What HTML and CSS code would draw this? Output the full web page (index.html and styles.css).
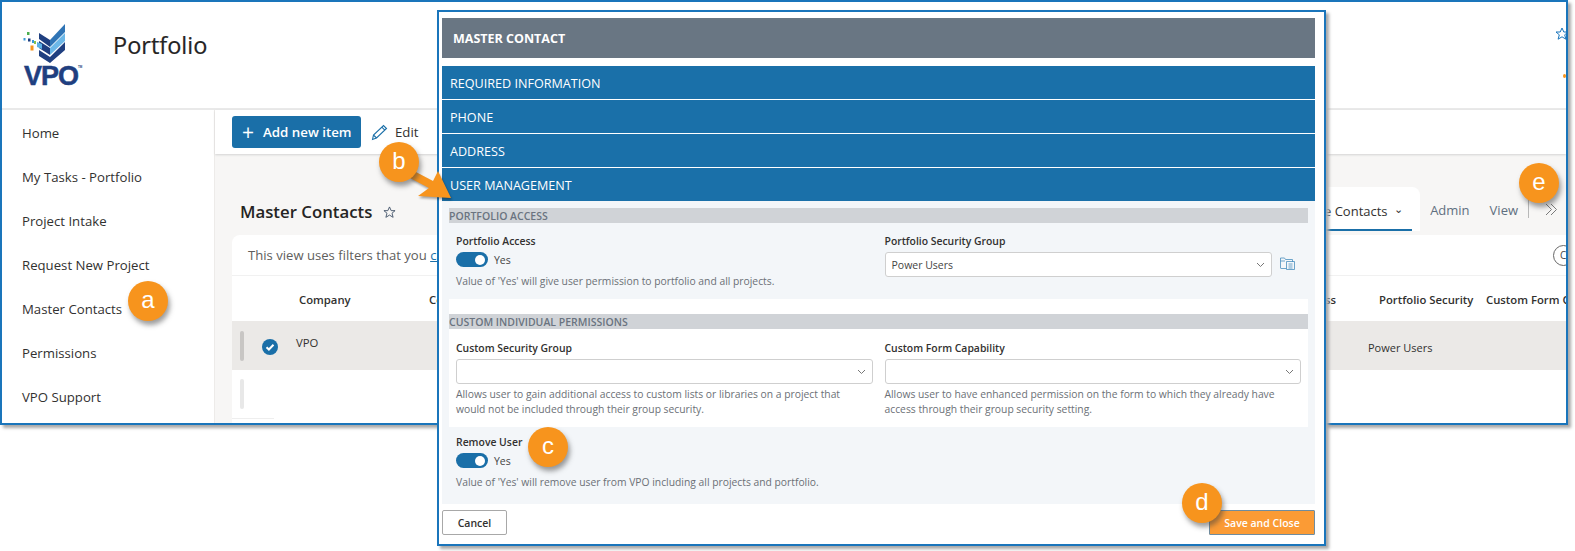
FILE: index.html
```html
<!DOCTYPE html>
<html lang="en">
<head>
<meta charset="utf-8">
<title>Master Contacts</title>
<link rel="stylesheet" href="styles.css">
</head>
<body>
<div class="stage">
  <div class="window">
    <header class="site-header">
      <div class="logo">
        <svg class="logo-mark" width="50" height="46" viewBox="20 20 50 46">
          <path fill="#1f3f80" d="M39 33l11 7v7l-11-8z"/>
          <path fill="#2f74b5" d="M50 40 65 24v8L50 47z"/>
          <path fill="#1f3f80" d="M39 41l11 7v7l-11-7z"/>
          <path fill="#6cb8e8" d="M50 48l15-15v8L50 55z"/>
          <path fill="#1f3f80" d="M39 50l11 7 15-15v8L50 63l-11-7z"/>
          <rect x="27" y="32" width="2.5" height="3" fill="#4caf50"/>
          <rect x="23.500" y="38" width="2" height="2.500" fill="#3a9ad9"/>
          <rect x="28" y="38.500" width="2.500" height="3" fill="#1f3f80"/>
          <rect x="32" y="40" width="2" height="3" fill="#3a9ad9"/>
          <rect x="34" y="41" width="2" height="3" fill="#8bc34a"/>
          <rect x="30.500" y="45.500" width="3" height="5" fill="#f7941d"/>
          <path fill="#5cb0e4" d="M37 42l5 2v5l-5-2z"/>
        </svg>
        <div class="logo-word">VPO<span class="logo-tm">TM</span></div>
      </div>
      <h1 class="site-title">Portfolio</h1>
      <div class="site-tools">
        <svg class="site-star" width="14" height="14" viewBox="0 0 14 14"><path fill="none" stroke="#1a75bb" d="M7 1l1.800 4h4.200l-3.300 2.800 1.200 4.400L7 9.800l-3.900 2.400 1.200-4.400L1 5h4.200z"/></svg>
        <span class="site-dot"></span>
      </div>
    </header>
    <div class="body-row">
      <nav class="side-nav">
        <a class="nav-item">Home</a>
        <a class="nav-item">My Tasks - Portfolio</a>
        <a class="nav-item">Project Intake</a>
        <a class="nav-item">Request New Project</a>
        <a class="nav-item">Master Contacts</a>
        <a class="nav-item">Permissions</a>
        <a class="nav-item">VPO Support</a>
      </nav>
      <main class="main">
        <div class="command-bar">
          <button class="add-btn"><span class="add-plus">+</span>Add new item</button>
          <button class="edit-btn">
            <svg width="17" height="17" viewBox="0 0 17 17"><path fill="none" stroke="#1a6fa8" stroke-width="1.100" d="M1.500 15.500l1-4.500L12.500 1.500l3 3-10 9.500zM2.500 11l3 3M10.800 3.200l3 3"/></svg>
            Edit
          </button>
        </div>
        <div class="title-row">
          <div class="page-title">Master Contacts
            <svg class="title-star" width="13" height="13" viewBox="0 0 14 14"><path fill="none" stroke="#44546a" d="M7 1l1.800 4h4.200l-3.300 2.800 1.200 4.400L7 9.800l-3.900 2.400 1.200-4.400L1 5h4.200z"/></svg>
          </div>
          <div class="tabs">
            <div class="tab tab-active">Active Contacts <span class="tab-caret">⌄</span></div>
            <div class="tab">Admin</div>
            <div class="tab">View</div>
            <div class="tab-sep"></div>
            <svg class="tab-more" width="13" height="13" viewBox="0 0 13 13"><path fill="none" stroke="#7a7a7a" d="M1 1l5.500 5.500L1 12M6 1l5.500 5.500L6 12"/></svg>
          </div>
        </div>
        <section class="card">
          <div class="filter-row">
            <span>This view uses filters that you <a class="filter-link">can edit</a></span>
            <span class="clear-circle">C</span>
          </div>
          <div class="grid-row grid-head">
            <div></div>
            <div>Company</div>
            <div class="col-contact"><span>Contact</span><span>Portfolio Access</span></div>
            <div>Portfolio Security</div>
            <div class="col-clip">Custom Form Capability</div>
          </div>
          <div class="grid-row grid-selected">
            <div class="row-lead"><span class="handle"></span>
              <svg class="check" width="16" height="16" viewBox="0 0 16 16"><circle cx="8" cy="8" r="8" fill="#1a6fa8"/><path fill="none" stroke="#fff" stroke-width="2" d="M4.500 8.200l2.400 2.300 4.600-4.700"/></svg>
            </div>
            <div class="cell-up">VPO</div>
            <div></div>
            <div class="cell-power">Power Users</div>
            <div></div>
          </div>
          <div class="grid-row grid-empty">
            <div class="row-lead"><span class="handle handle-light"></span></div>
          </div>
          <div class="stub-line"></div>
        </section>
      </main>
    </div>
  </div>

  <div class="modal">
    <div class="modal-head">MASTER CONTACT</div>
    <div class="accordion">
      <div class="acc-bar">REQUIRED INFORMATION</div>
      <div class="acc-bar">PHONE</div>
      <div class="acc-bar">ADDRESS</div>
      <div class="acc-bar">USER MANAGEMENT</div>
    </div>
    <div class="panel">
      <div class="sec-bar">PORTFOLIO ACCESS</div>
      <div class="fields fields-a">
        <div class="field">
          <div class="f-label">Portfolio Access</div>
          <div class="toggle-row"><span class="toggle"><span class="knob"></span></span>Yes</div>
          <div class="f-help f-help-a">Value of 'Yes' will give user permission to portfolio and all projects.</div>
        </div>
        <div class="field">
          <div class="f-label">Portfolio Security Group</div>
          <div class="select-row">
            <div class="select">Power Users<svg class="chev" width="9" height="6" viewBox="0 0 9 6"><path fill="none" stroke="#777" d="M1 1l3.500 3.500L8 1"/></svg></div>
            <svg class="folder" width="15" height="13" viewBox="0 0 15 13"><path fill="none" stroke="#4a8fbe" stroke-width=".8" d="M.5 11V1h4l1 1.500h7V5M.5 11.500h6M.5 4h4.500"/><path fill="none" stroke="#4a8fbe" stroke-width=".8" d="M6.500 4.500h8v8h-8zM8.500 7h4M8.500 9h4M8.500 11h4"/></svg>
          </div>
        </div>
      </div>
      <div class="white-block">
        <div class="sec-bar">CUSTOM INDIVIDUAL PERMISSIONS</div>
        <div class="fields fields-b">
          <div class="field">
            <div class="f-label">Custom Security Group</div>
            <div class="select"><svg class="chev" width="9" height="6" viewBox="0 0 9 6"><path fill="none" stroke="#777" d="M1 1l3.500 3.500L8 1"/></svg></div>
            <div class="f-help f-help-b">Allows user to gain additional access to custom lists or libraries on a project that would not be included through their group security.</div>
          </div>
          <div class="field">
            <div class="f-label">Custom Form Capability</div>
            <div class="select"><svg class="chev" width="9" height="6" viewBox="0 0 9 6"><path fill="none" stroke="#777" d="M1 1l3.500 3.500L8 1"/></svg></div>
            <div class="f-help f-help-b">Allows user to have enhanced permission on the form to which they already have access through their group security setting.</div>
          </div>
        </div>
      </div>
      <div class="fields-c">
        <div class="f-label">Remove User</div>
        <div class="toggle-row"><span class="toggle"><span class="knob"></span></span>Yes</div>
        <div class="f-help f-help-a">Value of 'Yes' will remove user from VPO including all projects and portfolio.</div>
      </div>
    </div>
    <div class="modal-foot">
      <button class="cancel-btn">Cancel</button>
      <button class="save-btn">Save and Close</button>
    </div>
  </div>

  <svg class="arrow" width="50" height="40" viewBox="0 0 50 40"><path fill="#f7941d" d="M6 12 L25 22 L30 12 L43 39 L10 37 L21 29 L2 19z"/></svg>
  <div class="badge badge-a">a</div>
  <div class="badge badge-b">b</div>
  <div class="badge badge-c">c</div>
  <div class="badge badge-d">d</div>
  <div class="badge badge-e">e</div>
</div>
</body>
</html>
```

FILE: styles.css
```css
* { box-sizing: border-box; }
html, body { margin: 0; padding: 0; background: #fff; }
body { font-family: "Open Sans", "Noto Sans", "Liberation Sans", sans-serif; color: #323130; }
button { font-family: inherit; cursor: default; }

.stage { position: relative; width: 1575px; height: 551px; overflow: hidden; }

.window {
  width: 1568px; height: 425px;
  border: 2px solid #1a75bb;
  box-shadow: 3px 3px 3px #a8a8a8;
  background: #fff;
  display: flex; flex-direction: column;
  overflow: hidden;
}

.site-header {
  height: 108px; flex: none;
  display: flex; align-items: flex-start;
  border-bottom: 2px solid #e9e9e9;
}
.logo { width: 111px; padding-left: 18px; padding-top: 18px; flex: none; position: relative; }
.logo-mark { display: block; }
.logo-word {
  font-family: "Liberation Sans", sans-serif; font-weight: 700;
  font-size: 27px; line-height: 22px; color: #1f3f80;
  letter-spacing: -1px; margin-top: -1px; margin-left: 4px;
  -webkit-text-stroke: .5px #1f3f80;
}
.logo-tm { font-size: 3px; position: relative; top: -17px; letter-spacing: 0; -webkit-text-stroke: 0; }
.site-title { margin: 26px 0 0; font-size: 23.500px; line-height: 34px; font-weight: 500; color: #252423; -webkit-text-stroke: .2px #252423; }
.site-tools { margin-left: auto; width: 10px; padding-top: 25px; flex: none; overflow: hidden; }
.site-star { display: block; margin-left: -1px; }
.site-dot { display: block; width: 3px; height: 4px; margin: 33px 0 0 7px; background: #f7941d; border-radius: 50%; }

.body-row { flex: 1; min-height: 0; display: flex; }
.side-nav { width: 213px; flex: none; padding-top: 1px; background: #fff; border-right: 1px solid #edebe9; }
.nav-item { display: flex; align-items: center; height: 44px; padding-left: 20px; font-size: 13.200px; color: #323130; }

.main { flex: 1; min-width: 0; background: #f7f6f5; display: flex; flex-direction: column; }
.command-bar {
  height: 44px; flex: none; background: #fff;
  display: flex; align-items: flex-start; gap: 10px;
  padding: 6px 0 0 17px;
  box-shadow: 0 1px 2px #d4d4d4;
}
.add-btn {
  width: 129px; height: 32px; background: #1a6fa8; border: 0; border-radius: 3px; color: #fff;
  display: flex; align-items: center; gap: 9px;
  font-size: 13.300px; font-weight: 600; padding: 0 0 0 10px;
}
.add-plus { font-size: 21px; font-weight: 400; line-height: 20px; }
.edit-btn {
  background: none; border: 0; padding: 0; height: 32px; color: #323130;
  display: flex; align-items: center; gap: 7px; font-size: 13.200px;
}

.title-row { height: 81px; flex: none; display: flex; justify-content: space-between; align-items: flex-end; padding: 0 8px 4px 25px; }
.page-title { font-size: 16.800px; font-weight: 600; color: #252423; margin-bottom: 8px; display: flex; align-items: center; gap: 11px; line-height: 22px; }
.tabs { display: flex; align-items: center; height: 44px; font-size: 13px; color: #5f6f80; }
.tab { padding: 0 10px; line-height: 44px; padding-top: 2px; }
.tab-active {
  background: #fff; color: #323130; font-weight: 500; width: 150px; white-space: nowrap;
  border-radius: 8px 8px 0 0; height: 44px;
  position: relative; padding-left: 25px;
}
.tab-active::after { content: ""; position: absolute; left: 0; right: 8px; bottom: 0; height: 2px; background: #1a6fa8; }
.tab-caret { font-size: 11px; margin-left: 3px; position: relative; top: -3px; }
.tab-sep { width: 1px; height: 18px; background: #b8b8b8; }
.tab-more { margin-left: 16px; flex: none; }

.card { flex: 1; min-height: 0; margin-left: 17px; background: #fff; border-radius: 8px 0 0 0; overflow: hidden; }
.filter-row {
  height: 41px; display: flex; justify-content: space-between; align-items: center;
  padding-left: 16px; font-size: 13.100px; color: #605e5c; border-bottom: 1px solid #f1f1f1;
}
.filter-link { color: #1a6fa8; text-decoration: underline; }
.clear-circle {
  flex: none; width: 21px; height: 21px; border: 1px solid #666; border-radius: 50%;
  font-size: 10px; line-height: 19px; padding-left: 6px; margin-right: -8px; color: #444;
}
.grid-row { display: grid; grid-template-columns: 67px 130px 1fr 107px 80px; align-items: center; font-size: 11.300px; }
.grid-head { height: 45px; padding-top: 2px; font-weight: 600; color: #323130; white-space: nowrap; }
.col-contact { display: flex; justify-content: space-between; padding-right: 43px; }
.col-clip { overflow: hidden; }
.grid-selected { height: 49px; background: #ebe9e7; }
.grid-empty { height: 48px; }
.row-lead { display: flex; align-items: center; padding-left: 8px; height: 100%; }
.handle { width: 4px; height: 30px; background: #c8c6c4; border-radius: 2px; }
.handle-light { background: #e8e8e8; }
.check { margin-left: 18px; margin-top: 2px; }
.cell-up { margin-top: -6px; margin-left: -3px; }
.cell-power { margin-left: -11px; white-space: nowrap; margin-top: 3px; font-size: 11px; }
.stub-line { width: 42px; height: 1px; background: #eeeeee; }

.modal {
  position: absolute; left: 437px; top: 10px; width: 889px; height: 536px;
  background: #fff; border: 2px solid #1a75bb;
  box-shadow: 3px 3px 3px #a8a8a8;
  padding: 6px 9px 0 3px;
  display: flex; flex-direction: column;
}
.modal-head {
  height: 40px; flex: none; background: #697683; color: #fff; font-weight: 700;
  font-size: 12.500px; display: flex; align-items: center; padding: 1px 0 0 11px;
}
.accordion { margin-top: 8px; flex: none; display: flex; flex-direction: column; gap: 1px; }
.acc-bar { height: 33px; background: #1a70a9; color: #fff; font-size: 12.600px; display: flex; align-items: center; padding: 1px 0 0 8px; }
.panel { height: 303px; flex: none; background: #f3f6f9; padding: 7px 7px 0; display: flex; flex-direction: column; }
.sec-bar { height: 15px; flex: none; background: #d0d3d7; color: #6a7380; font-size: 10.500px; font-weight: 600; line-height: 16px; }
.fields { display: grid; grid-template-columns: 1fr 1fr; gap: 12px; padding: 0 7px; }
.fields-a { height: 76px; padding-top: 11px; }
.fields-b { height: 98px; padding-top: 12px; }
.f-label { font-size: 10.400px; font-weight: 600; color: #323130; line-height: 14px; }
.toggle-row { display: flex; align-items: center; gap: 6px; height: 15px; margin-top: 4px; font-size: 10.500px; color: #444; }
.toggle { width: 32px; height: 15px; border-radius: 8px; background: #1a6fa8; position: relative; flex: none; }
.knob { position: absolute; right: 3px; top: 2.500px; width: 10px; height: 10px; border-radius: 50%; background: #fff; }
.f-help { font-size: 10.320px; line-height: 15px; color: #6b7076; }
.f-help-a { margin-top: 7px; }
.f-help-b { margin-top: 3px; padding-right: 24px; }
.select {
  height: 25px; background: #fff; border: 1px solid #cfcfcf; border-radius: 3px; margin-top: 4px;
  display: flex; align-items: center; justify-content: space-between; padding: 0 6px 0 6px;
  font-size: 10.500px; color: #444; flex: 1;
}
.select .chev { margin-left: auto; }
.select-row { display: flex; align-items: center; gap: 8px; }
.folder { margin-right: 6px; margin-top: 2px; flex: none; }
.white-block { height: 128px; flex: none; background: #fff; padding-top: 15px; }
.fields-c { padding: 8px 7px 0; }
.modal-foot { flex: 1; display: flex; justify-content: space-between; align-items: flex-start; padding-top: 6px; }
.cancel-btn {
  width: 65px; height: 25px; background: #fff; border: 1px solid #a8a8a8; border-radius: 2px;
  font-size: 10.500px; font-weight: 600; color: #323130; padding: 0;
}
.save-btn {
  width: 106px; height: 25px; background: #fb9b35; border: 1px solid #6f8c9f; border-radius: 1px;
  font-size: 10.500px; font-weight: 600; color: #fff; padding: 0;
}

.arrow { position: absolute; left: 408px; top: 159px; filter: drop-shadow(1px 2px 1px rgba(0,0,0,.35)); }
.badge {
  position: absolute; width: 40px; height: 40px; border-radius: 50%;
  background: #f7941d; color: #fff; font-family: "Liberation Sans", sans-serif;
  font-size: 24px; line-height: 37px; text-align: center;
  box-shadow: 2px 4px 5px rgba(60,60,60,.5);
}
.badge-a { left: 128px; top: 281px; }
.badge-b { left: 379px; top: 142px; }
.badge-c { left: 528px; top: 427px; }
.badge-d { left: 1182px; top: 483px; }
.badge-e { left: 1519px; top: 163px; }
```
